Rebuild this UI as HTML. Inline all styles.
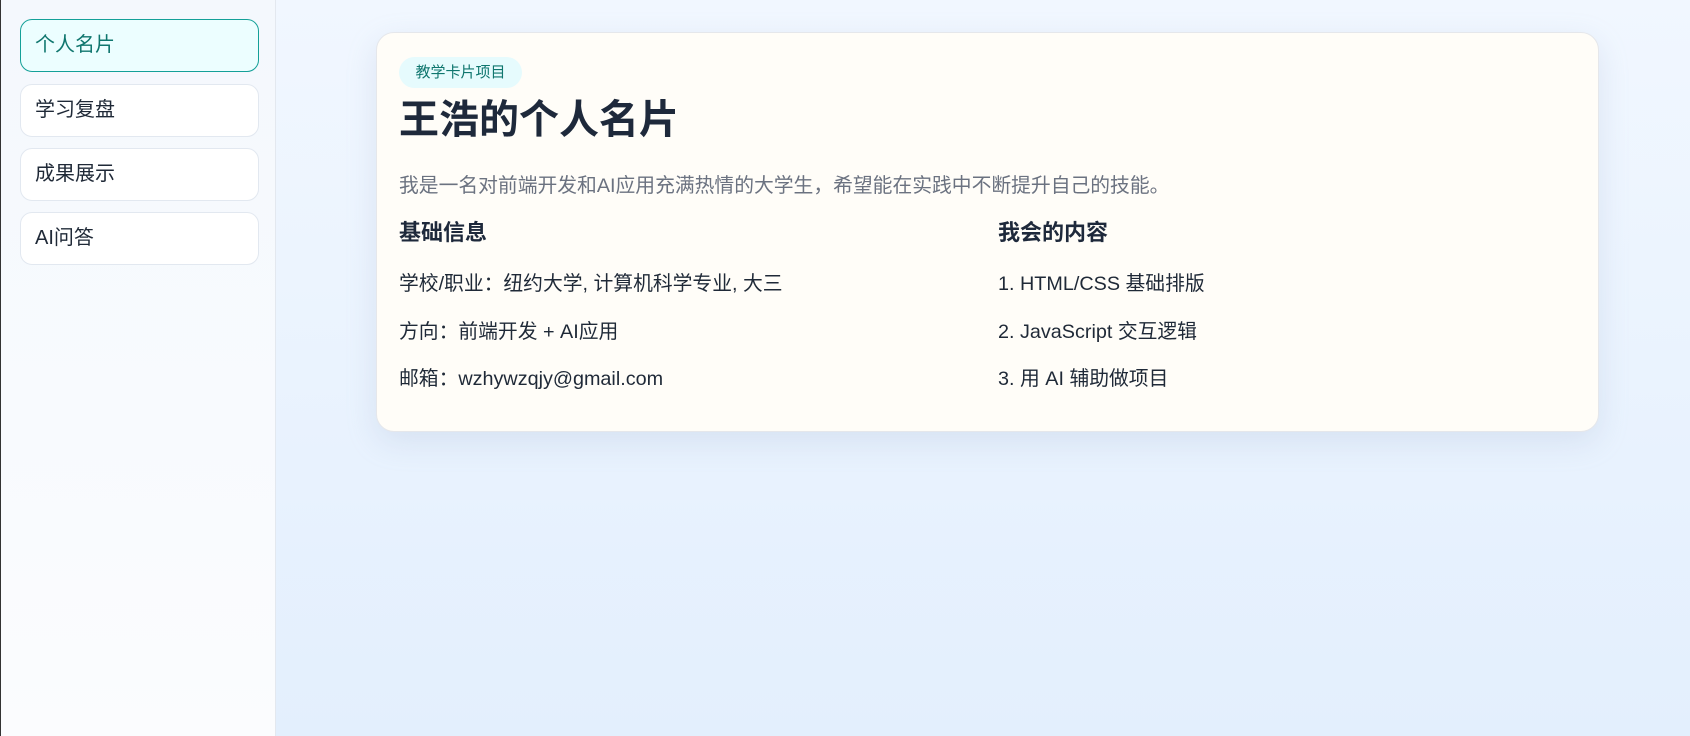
<!DOCTYPE html>
<html><head><meta charset="utf-8"><style>
*{margin:0;padding:0;box-sizing:border-box}
body{width:1690px;height:736px;overflow:hidden;font-family:"Liberation Sans","Noto Sans CJK SC",sans-serif;background:linear-gradient(#f1f7ff,#e3effd);position:relative}
.side{position:absolute;left:0;top:0;width:276px;height:736px;background:linear-gradient(#f4f8fd,#fbfcfe);border-right:1px solid #e3e8ef;border-left:1px solid #333}
.nav{position:absolute;left:19px;width:239px;height:53px;border:1px solid #e2e8f0;border-radius:12px;background:#fff;font-size:20px;color:#1f2937;padding-left:14px;line-height:51px}
.nav.on{background:#ecfeff;border-color:#14a098;color:#0f766e}
.card{position:absolute;left:376px;top:32px;width:1223px;height:400px;background:#fffdf8;border:1px solid #e5e7eb;border-radius:18px;box-shadow:0 10px 30px rgba(148,170,200,.22)}
.badge{position:absolute;left:22px;top:24px;width:123px;height:31px;border-radius:16px;background:#e6fbfd;color:#0f766e;font-size:15px;line-height:31px;text-align:center}
h1{position:absolute;left:22px;top:54px;font-size:40px;color:#1e293b;font-weight:bold;white-space:nowrap}
.desc{position:absolute;left:22px;top:136px;font-size:19.8px;color:#6b7280;white-space:nowrap}
h3{position:absolute;top:182px;font-size:22px;color:#1e293b;font-weight:bold}
.it{position:absolute;font-size:19.8px;color:#1f2937;white-space:nowrap}
</style></head><body>
<div class="side">
<div class="nav on" style="top:19px">个人名片</div>
<div class="nav" style="top:84px">学习复盘</div>
<div class="nav" style="top:148px">成果展示</div>
<div class="nav" style="top:212px">AI问答</div>
</div>
<div class="card">
<div class="badge">教学卡片项目</div>
<h1>王浩的个人名片</h1>
<div class="desc">我是一名对前端开发和AI应用充满热情的大学生，希望能在实践中不断提升自己的技能。</div>
<h3 style="left:22px">基础信息</h3>
<h3 style="left:621px">我会的内容</h3>
<div class="it" style="left:22px;top:234px">学校/职业：纽约大学, 计算机科学专业, 大三</div>
<div class="it" style="left:22px;top:282px">方向：前端开发 + AI应用</div>
<div class="it" style="left:22px;top:329px">邮箱：wzhywzqjy@gmail.com</div>
<div class="it" style="left:621px;top:234px">1. HTML/CSS 基础排版</div>
<div class="it" style="left:621px;top:282px">2. JavaScript 交互逻辑</div>
<div class="it" style="left:621px;top:329px">3. 用 AI 辅助做项目</div>
</div>
</body></html>
